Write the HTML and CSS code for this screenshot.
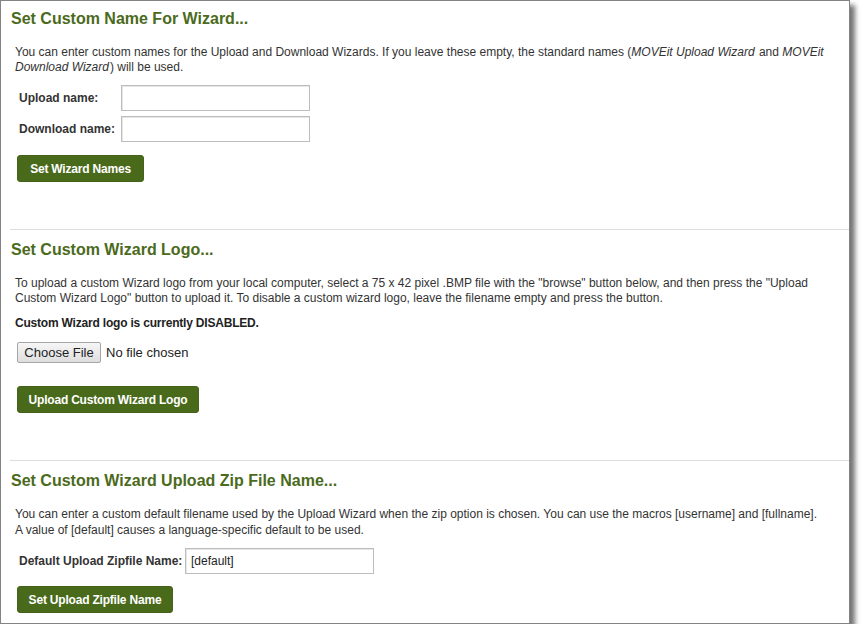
FILE: index.html
```html
<!DOCTYPE html>
<html>
<head>
<meta charset="utf-8">
<link rel="stylesheet" href="styles.css">
</head>
<body>
<div class="frame">
  <section class="section s1">
    <h2 class="title">Set Custom Name For Wizard...</h2>
    <p class="desc">You can enter custom names for the Upload and Download Wizards. If you leave these empty, the standard names (<i>MOVEit Upload Wizard</i> and <i>MOVEit Download Wizard</i>) will be used.</p>
    <div class="form-grid">
      <label class="lbl">Upload name:</label>
      <input class="txt" type="text">
      <label class="lbl">Download name:</label>
      <input class="txt" type="text">
    </div>
    <button class="btn btn-names">Set Wizard Names</button>
  </section>
  <section class="section s2">
    <h2 class="title">Set Custom Wizard Logo...</h2>
    <p class="desc">To upload a custom Wizard logo from your local computer, select a 75 x 42 pixel .BMP file with the "browse" button below, and then press the "Upload Custom Wizard Logo" button to upload it. To disable a custom wizard logo, leave the filename empty and press the button.</p>
    <p class="status">Custom Wizard logo is currently DISABLED.</p>
    <div class="file-row">
      <span class="file-btn">Choose File</span>
      <span class="file-name">No file chosen</span>
    </div>
    <button class="btn btn-logo">Upload Custom Wizard Logo</button>
  </section>
  <section class="section s3">
    <h2 class="title">Set Custom Wizard Upload Zip File Name...</h2>
    <p class="desc">You can enter a custom default filename used by the Upload Wizard when the zip option is chosen. You can use the macros [username] and [fullname]. A value of [default] causes a language-specific default to be used.</p>
    <div class="zip-row">
      <label class="lbl">Default Upload Zipfile Name:</label>
      <input class="txt" type="text" value="[default]">
    </div>
    <button class="btn btn-zip">Set Upload Zipfile Name</button>
  </section>
</div>
</body>
</html>
```

FILE: styles.css
```css
html, body {
  margin: 0;
  padding: 0;
  background: #ffffff;
}
body {
  font-family: "Liberation Sans", Arial, sans-serif;
  color: #333333;
}
.frame {
  width: 848px;
  height: 622px;
  border: 1px solid #838383;
  background: #ffffff;
  box-shadow: 5px 5px 5px rgba(0, 0, 0, 0.55);
  overflow: hidden;
}
.section {
  margin-left: 9px;
}
.section + .section {
  border-top: 1px solid #dddddd;
}
.title {
  margin: 0 0 0 1px;
  font-size: 16px;
  line-height: 18px;
  font-weight: bold;
  color: #4b6a1c;
}
.s1 .title { padding-top: 9px; }
.s2 .title { padding-top: 11px; }
.s3 .title { padding-top: 11px; }
.desc {
  margin: 17px 24px 0 5px;
  font-size: 12px;
  line-height: 15px;
  color: #333333;
}
.s3 .desc { margin-top: 16px; line-height: 16px; }
.desc i { font-style: italic; padding-right: 1px; }
.form-grid {
  display: grid;
  grid-template-columns: 102px 189px;
  row-gap: 5px;
  align-items: center;
  margin: 10px 0 0 9px;
}
.lbl {
  font-size: 12px;
  font-weight: bold;
  color: #333333;
}
.txt {
  box-sizing: border-box;
  height: 26px;
  width: 189px;
  margin: 0;
  padding: 2px 5px;
  border: 1px solid #bdbdbd;
  box-shadow: inset 1px 1px 0 #e6e6e6;
  font-family: "Liberation Sans", Arial, sans-serif;
  font-size: 12px;
  color: #222222;
  background: #ffffff;
}
.btn {
  display: block;
  box-sizing: border-box;
  height: 27px;
  padding: 0 10px;
  border: 1px solid #44621a;
  border-radius: 3px;
  background: #4a6a1b;
  color: #ffffff;
  font-family: "Liberation Sans", Arial, sans-serif;
  font-size: 12px;
  font-weight: bold;
  letter-spacing: -0.2px;
}
.btn-names { width: 127px; margin: 13px 0 47px 7px; }
.status {
  margin: 10px 0 0 5px;
  font-size: 12px;
  line-height: 15px;
  font-weight: bold;
  letter-spacing: -0.2px;
  color: #222222;
}
.file-row {
  display: flex;
  align-items: center;
  gap: 5px;
  margin: 11px 0 0 7px;
}
.file-btn {
  box-sizing: border-box;
  height: 21px;
  width: 84px;
  display: flex;
  align-items: center;
  justify-content: center;
  border: 1px solid #a6a6a6;
  border-radius: 2px;
  background: linear-gradient(#f6f6f6, #dedede);
  font-size: 13px;
  color: #222222;
}
.file-name {
  font-size: 13px;
  color: #222222;
}
.btn-logo { width: 182px; margin: 23px 0 47px 7px; }
.zip-row {
  display: flex;
  align-items: center;
  margin: 10px 0 0 9px;
}
.zip-row .lbl { width: 166px; }
.zip-row .txt { height: 26px; }
.btn-zip { width: 156px; margin: 12px 0 0 7px; }
```
